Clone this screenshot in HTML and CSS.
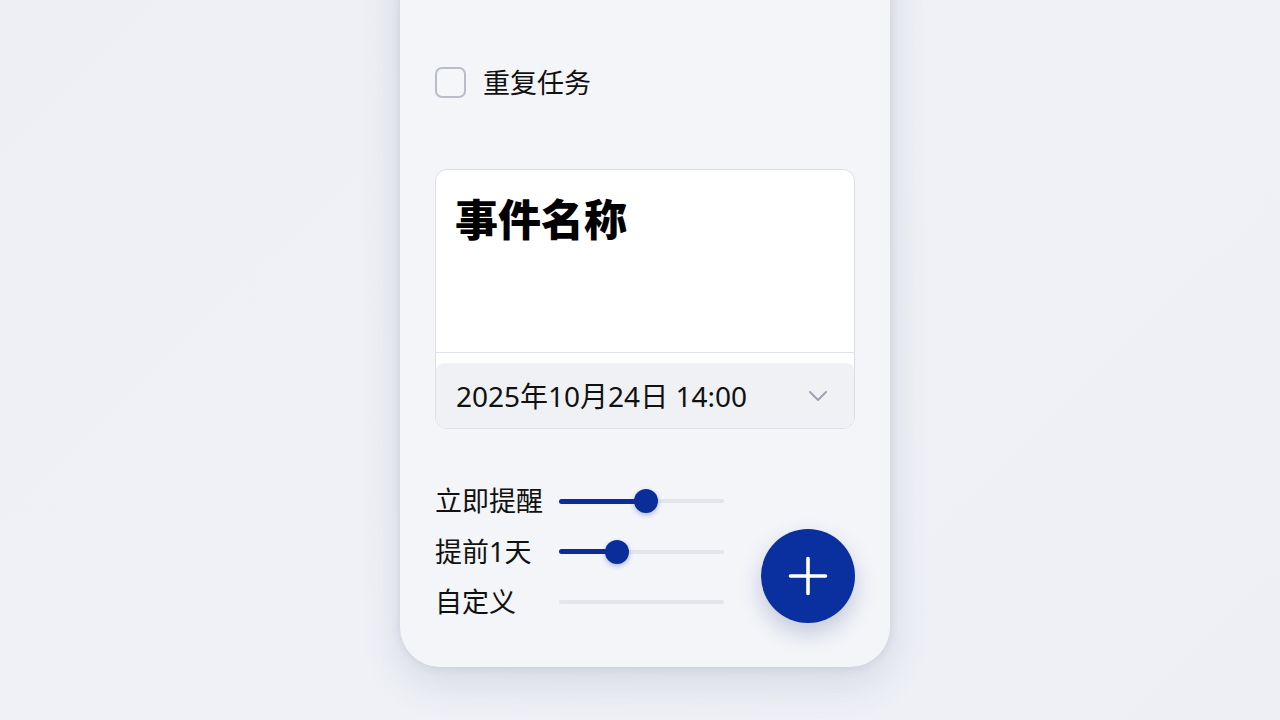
FILE: index.html
```html
<!DOCTYPE html>
<html lang="zh-CN">
<head>
<meta charset="utf-8">
<title>新建事件</title>
<link rel="stylesheet" href="styles.css">
</head>
<body>
<div class="stage">
  <div class="phone">
    <label class="repeat">
      <span class="checkbox"></span>
      <span class="repeat-text">重复任务</span>
    </label>

    <div class="event-card">
      <div class="title-area">
        <div class="event-title">事件名称</div>
      </div>
      <div class="date-wrap">
        <div class="date-field">
          <span class="date-text">2025年10月24日 14:00</span>
          <svg class="chevron" width="20" height="12" viewBox="0 0 20 12"><path d="M2 2 L10 10 L18 2" fill="none" stroke="#9ea3b3" stroke-width="2" stroke-linecap="round" stroke-linejoin="round"/></svg>
        </div>
      </div>
    </div>

    <div class="bottom">
      <div class="reminders">
        <div class="reminder">
          <span class="r-label">立即提醒</span>
          <div class="track"><div class="fill" style="width:87px"></div><span class="thumb" style="left:87px"></span></div>
        </div>
        <div class="reminder">
          <span class="r-label">提前1天</span>
          <div class="track"><div class="fill" style="width:58px"></div><span class="thumb" style="left:58px"></span></div>
        </div>
        <div class="reminder">
          <span class="r-label">自定义</span>
          <div class="track"></div>
        </div>
      </div>
      <button class="fab" aria-label="添加">
        <svg width="40" height="40" viewBox="0 0 40 40"><path d="M20 2.5 V37.5 M2.5 20 H37.5" stroke="#fff" stroke-width="3.6" stroke-linecap="round"/></svg>
      </button>
    </div>
  </div>
</div>
</body>
</html>
```

FILE: styles.css
```css
html, body {
  margin: 0;
  padding: 0;
  height: 100%;
  overflow: hidden;
}
body {
  background: linear-gradient(135deg, #edeff4 0%, #eff1f6 50%, #edeff5 100%);
  font-family: "Noto Sans", "Noto Sans CJK SC", sans-serif;
  color: #111;
}
.stage {
  width: 1280px;
  height: 720px;
}
.phone {
  box-sizing: border-box;
  margin-left: 400px;
  margin-top: -40px;
  width: 490px;
  height: 707px;
  background: #f3f5f9;
  border-radius: 0 0 40px 40px;
  box-shadow: 0 14px 40px rgba(70, 80, 115, 0.16), 0 0 10px rgba(80, 85, 125, 0.12);
  padding: 107px 35px 0 35px;
}
.repeat {
  display: flex;
  align-items: center;
  height: 31px;
}
.checkbox {
  box-sizing: border-box;
  width: 31px;
  height: 31px;
  border: 2px solid #b9bdc9;
  border-radius: 7px;
  background: #f4f6fa;
}
.repeat-text {
  margin-left: 17px;
  font-size: 27px;
  line-height: 31px;
}
.event-card {
  margin-top: 71px;
  width: 420px;
  box-sizing: border-box;
  border: 1px solid #dcdfe6;
  border-radius: 12px;
  background: #fff;
  overflow: hidden;
}
.title-area {
  height: 183px;
  box-sizing: border-box;
  padding: 20px 20px 0 19px;
  border-bottom: 1px solid #dfe2e8;
}
.event-title {
  font-family: "Noto Sans CJK SC", sans-serif;
  font-size: 43px;
  font-weight: 900;
  line-height: 54px;
  color: #000;
}
.date-wrap {
  padding-top: 10px;
  background: #fff;
}
.date-field {
  height: 65px;
  background: #eff1f5;
  border-radius: 8px 8px 0 0;
  display: flex;
  align-items: center;
  padding: 0 26px 0 20px;
  justify-content: space-between;
}
.date-text {
  font-size: 28px;
  line-height: 34px;
}
.chevron {
  display: block;
}
.bottom {
  display: flex;
  align-items: flex-end;
  margin-top: 47px;
  width: 420px;
}
.reminders {
  display: flex;
  flex-direction: column;
}
.reminder {
  display: flex;
  align-items: center;
  height: 50.5px;
}
.r-label {
  width: 124px;
  font-size: 27px;
  line-height: 32px;
}
.track {
  position: relative;
  width: 165px;
  height: 4px;
  border-radius: 2px;
  background: #e3e5ea;
}
.fill {
  position: absolute;
  left: 0;
  top: -0.5px;
  height: 5px;
  border-radius: 3px;
  background: #0b2d9a;
}
.thumb {
  position: absolute;
  top: 2px;
  width: 24px;
  height: 24px;
  margin-left: -12px;
  margin-top: -12px;
  border-radius: 50%;
  background: #0b2d9a;
  box-shadow: 0 2px 5px rgba(11, 45, 154, 0.3);
}
.fab {
  margin-left: auto;
  margin-bottom: 5px;
  width: 94px;
  height: 94px;
  border: none;
  border-radius: 50%;
  background: #0a2f9f;
  display: flex;
  align-items: center;
  justify-content: center;
  box-shadow: 0 10px 22px rgba(30, 45, 110, 0.22);
  padding: 0;
}
.fab svg {
  display: block;
}
```
